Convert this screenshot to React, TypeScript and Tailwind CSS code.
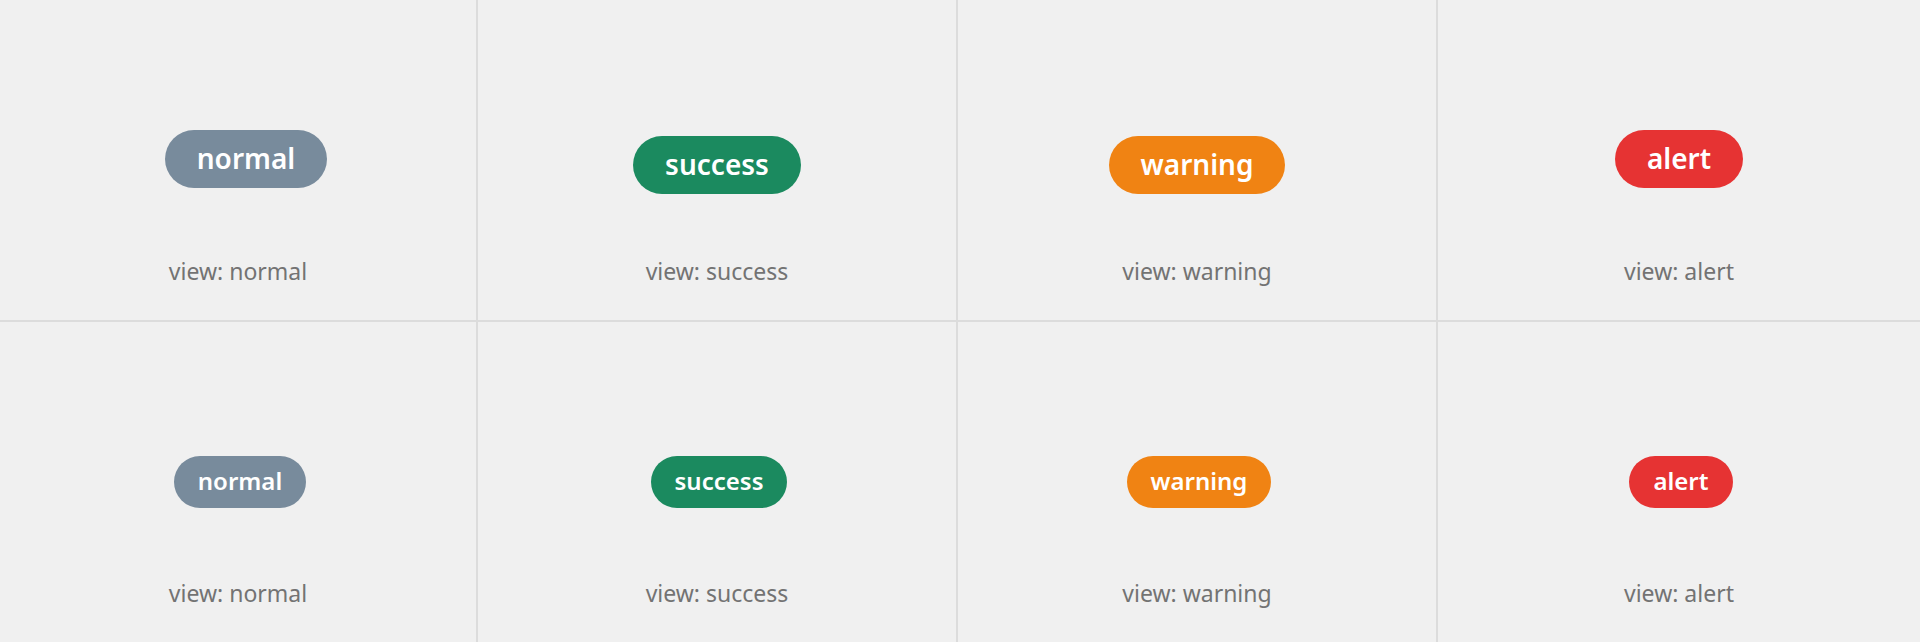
type Size = "l" | "m";

interface Cell {
  view: string;
  color: string;
  size: Size;
  stage: string;
}

const sizes: Record<Size, string> = {
  l: "h-[58px] px-8 text-[28px]",
  m: "h-[52px] px-6 text-[24px]",
};

const rows: Cell[][] = [
  [
    { view: "normal", color: "bg-[#788b9c]", size: "l", stage: "pt-[130px] pl-4" },
    { view: "success", color: "bg-[#1b8a5f]", size: "l", stage: "pt-[136px]" },
    { view: "warning", color: "bg-[#f08313]", size: "l", stage: "pt-[136px]" },
    { view: "alert", color: "bg-[#e63333]", size: "l", stage: "pt-[130px]" },
  ],
  [
    { view: "normal", color: "bg-[#788b9c]", size: "m", stage: "pt-[134px] pl-1" },
    { view: "success", color: "bg-[#1b8a5f]", size: "m", stage: "pt-[134px] pl-1" },
    { view: "warning", color: "bg-[#f08313]", size: "m", stage: "pt-[134px] pl-1" },
    { view: "alert", color: "bg-[#e63333]", size: "m", stage: "pt-[134px] pl-1" },
  ],
];

function Badge({ view, color, size }: Pick<Cell, "view" | "color" | "size">) {
  return (
    <span
      className={`inline-flex items-center justify-center rounded-full pb-0.5 leading-none font-semibold text-white ${sizes[size]} ${color}`}
    >
      {view}
    </span>
  );
}

export default function App() {
  return (
    <main className="min-h-screen bg-[#f0f0f0] font-['Noto_Sans','Open_Sans',sans-serif]">
      {rows.map((cells, index) => (
        <section
          key={index}
          className="grid grid-cols-[478fr_480fr_480fr_482fr] border-b-2 border-[#dcdcdc] last:border-b-0"
        >
          {cells.map((cell) => (
            <figure
              key={cell.view}
              className="flex flex-col border-r-2 border-[#dcdcdc] last:border-r-0"
            >
              <div className={`flex h-[255px] items-start justify-center ${cell.stage}`}>
                <Badge view={cell.view} color={cell.color} size={cell.size} />
              </div>
              <figcaption className="h-[65px] text-center text-[23px] leading-8 text-[#737373]">
                view: {cell.view}
              </figcaption>
            </figure>
          ))}
        </section>
      ))}
    </main>
  );
}
